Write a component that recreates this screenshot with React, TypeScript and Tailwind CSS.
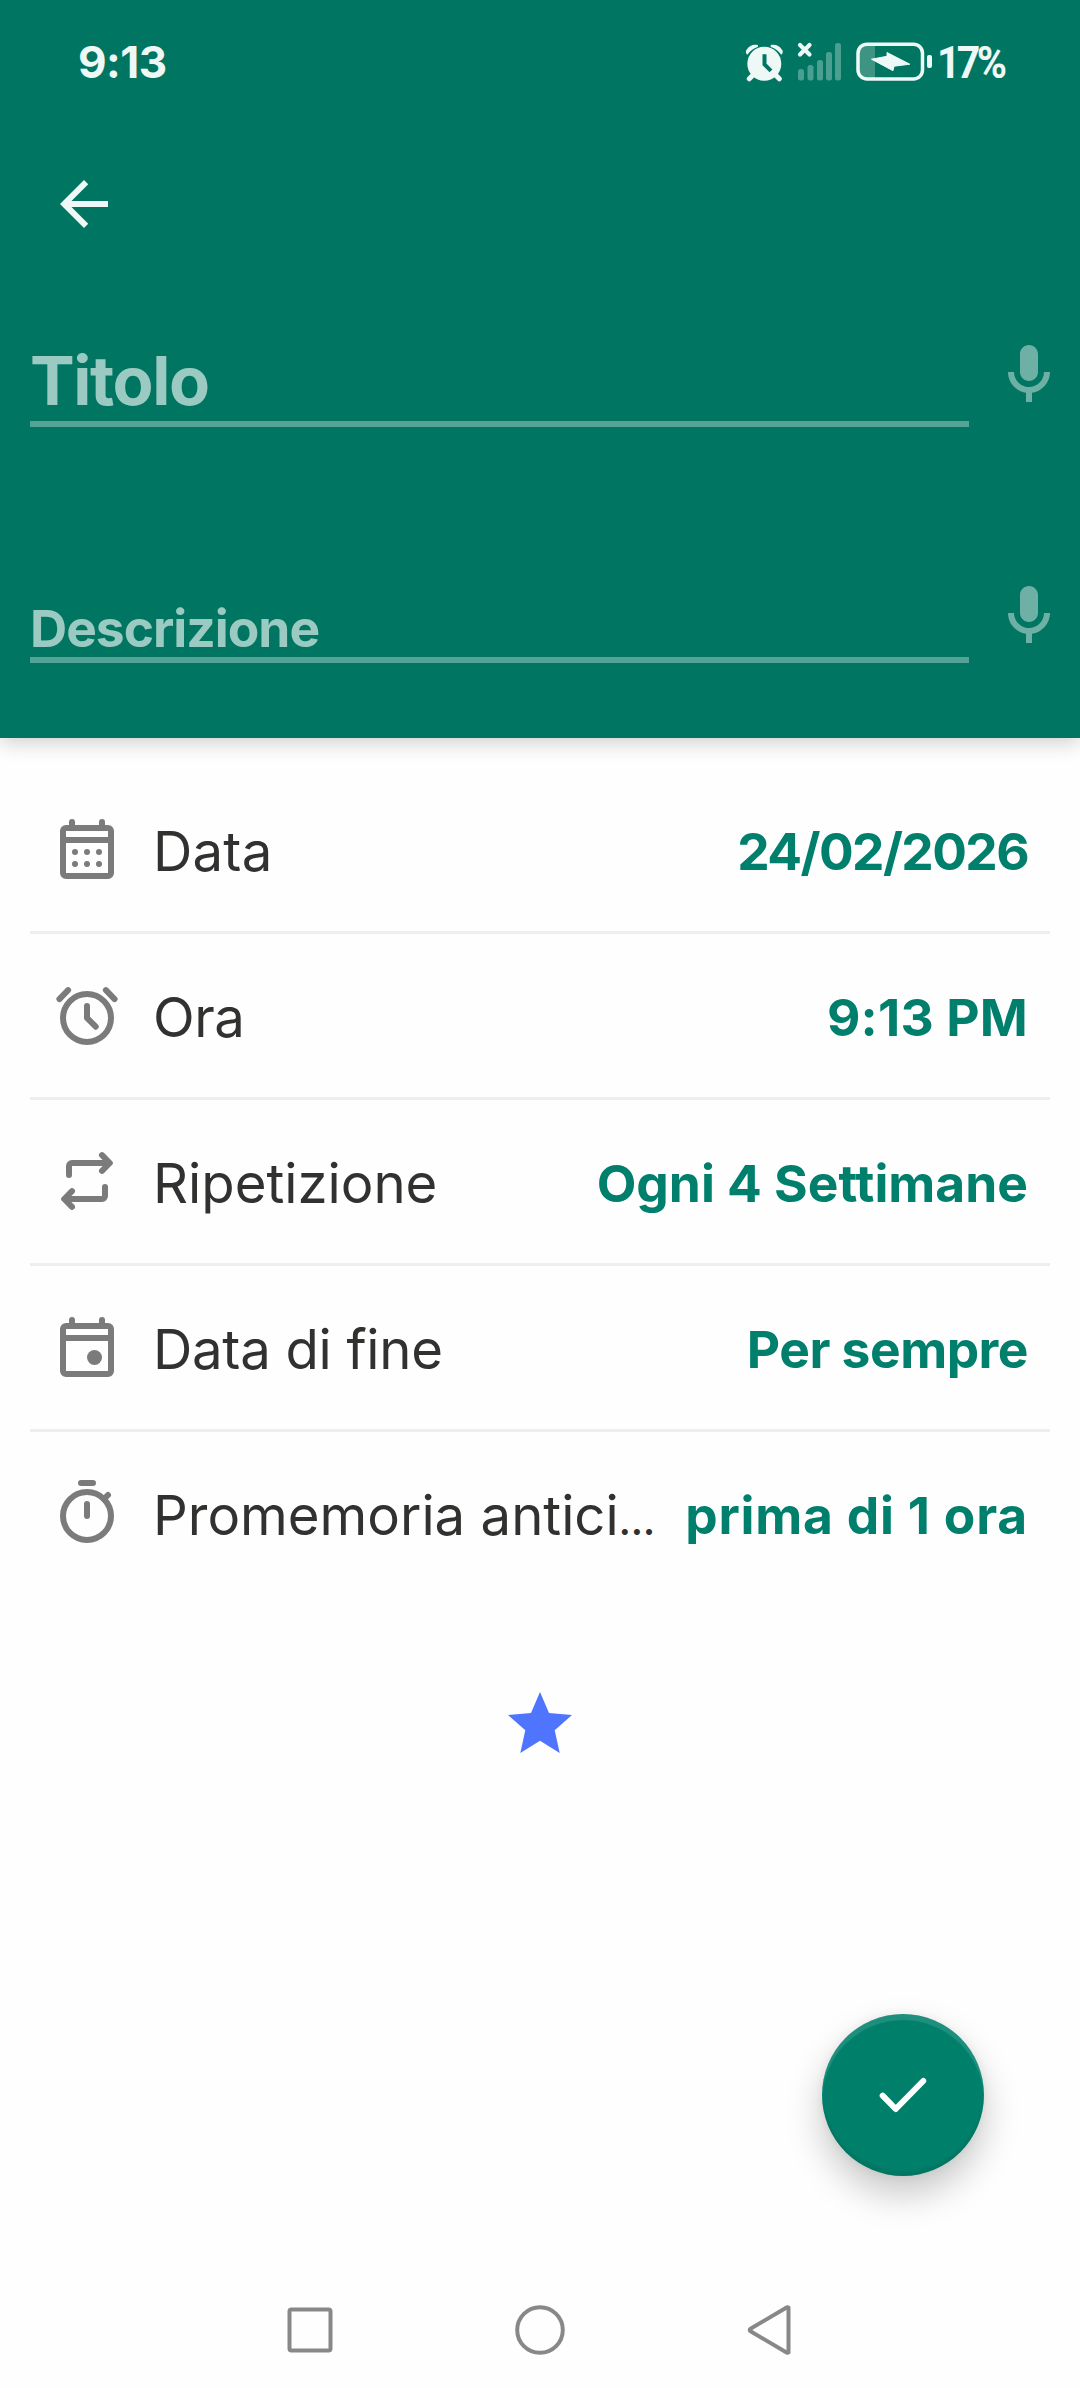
import React from 'react';

type IconProps = { children: React.ReactNode };

const RowIcon = ({ children }: IconProps) => (
  <svg
    viewBox="0 0 24 24"
    className="mb-px w-[72px] h-[72px] flex-shrink-0 text-[#7b7b7b]"
    fill="none"
    stroke="currentColor"
    strokeWidth="2"
    strokeLinecap="round"
    strokeLinejoin="round"
  >
    {children}
  </svg>
);

const calendarFrame = (
  <>
    <rect x="4" y="5" width="16" height="16" rx="1" />
    <path d="M4 9h16M7 3v2M17 3v2" />
  </>
);

const rows = [
  {
    label: 'Data',
    value: '24/02/2026',
    labelClass: 'tracking-[0.2px]',
    valueClass: 'tracking-[-1.6px]',
    truncated: false,
    icon: (
      <>
        {calendarFrame}
        <g fill="currentColor" stroke="none">
          <circle cx="8" cy="13" r="1" />
          <circle cx="12" cy="13" r="1" />
          <circle cx="16" cy="13" r="1" />
          <circle cx="8" cy="17" r="1" />
          <circle cx="12" cy="17" r="1" />
          <circle cx="16" cy="17" r="1" />
        </g>
      </>
    ),
  },
  {
    label: 'Ora',
    value: '9:13 PM',
    labelClass: 'tracking-[-0.5px]',
    valueClass: 'tracking-[0.2px]',
    truncated: false,
    icon: (
      <>
        <circle cx="12" cy="13" r="8" />
        <path d="M12 9v4l2.9 2.9M5.7 3.7 2.8 6.7M18.3 3.7l2.9 3" />
      </>
    ),
  },
  {
    label: 'Ripetizione',
    value: 'Ogni 4 Settimane',
    labelClass: 'tracking-[0px]',
    valueClass: 'tracking-[0px]',
    truncated: false,
    icon: (
      <>
        <path d="M6 10V7a1 1 0 0 1 1-1h12M17 3.4 19.6 6 17 8.6" />
        <path d="M18 14v3a1 1 0 0 1-1 1H5M7 15.4 4.4 18 7 20.6" />
      </>
    ),
  },
  {
    label: 'Data di fine',
    value: 'Per sempre',
    labelClass: 'tracking-[-0.3px]',
    valueClass: 'tracking-[-0.5px]',
    truncated: false,
    icon: (
      <>
        {calendarFrame}
        <circle cx="14.5" cy="15.5" r="2.5" fill="currentColor" stroke="none" />
      </>
    ),
  },
  {
    label: 'Promemoria antici',
    value: 'prima di 1 ora',
    labelClass: 'tracking-[0px]',
    valueClass: 'tracking-[0.8px]',
    truncated: true,
    icon: (
      <>
        <circle cx="12" cy="13" r="8" />
        <path d="M10 2h4M12 9v4M19 6l-1.4 1.4" />
      </>
    ),
  },
];

const MicIcon = () => (
  <svg viewBox="0 0 24 24" className="w-[72px] h-[72px] flex-shrink-0" fill="#6eb0a5">
    <path d="M12 14c1.66 0 3-1.34 3-3V5c0-1.66-1.34-3-3-3S9 3.34 9 5v6c0 1.66 1.34 3 3 3zm5-3c0 2.76-2.24 5-5 5s-5-2.24-5-5H5c0 3.53 2.61 6.43 6 6.92V21h2v-3.08c3.39-.49 6-3.39 6-6.92h-2z" />
  </svg>
);

const StatusBar = () => (
  <div className="flex h-[124px] items-center justify-between pl-[78px] pr-[74px] text-[#eef9f7]">
    <span className="text-[44px] leading-none font-[650] tracking-[-0.5px]">9:13</span>
    <div className="flex items-center">
      {/* Sveglia, segnale e batteria */}
      <svg viewBox="0 0 190 44" className="w-[190px] h-[44px] overflow-visible" fill="none">
        <g transform="translate(1.800 .3)">
          <g fill="#eef9f7">
            <circle cx="22.500" cy="23.500" r="17" />
            <path d="M5.500 14.500a3.500 3.500 0 0 1-.3-5.500A10 10 0 0 1 15 4.500a1.500 1.500 0 0 1 .8 2.300A22 22 0 0 0 5.500 14.500z" />
            <path d="M39.500 14.500a3.500 3.500 0 0 0 .3-5.500A10 10 0 0 0 30 4.500a1.500 1.500 0 0 0-.8 2.300A22 22 0 0 1 39.500 14.500z" />
          </g>
          <path d="M11 35l-3.500 3.500M34 35l3.500 3.500" stroke="#eef9f7" strokeWidth="5" strokeLinecap="round" />
          <path d="M22.700 14v10l6.500 6.500" stroke="#007662" strokeWidth="4" />
        </g>
        <path d="M60 5l9.500 9.500M69.500 5 60 14.500" stroke="#eef9f7" strokeWidth="4.200" strokeLinecap="round" />
        <g fill="#4a9f90">
          <rect x="58" y="29" width="6" height="11.500" rx="2.500" />
          <rect x="67.500" y="25" width="6" height="15.500" rx="2.500" />
          <rect x="77" y="20" width="6" height="20.500" rx="2.500" />
          <rect x="86" y="12" width="6" height="28.500" rx="2.500" />
          <rect x="95" y="3" width="6" height="37.500" rx="2.500" />
        </g>
        <path d="M135 5h-8a9 9 0 0 0-9 9v15a9 9 0 0 0 9 9h8z" fill="#3d9482" />
        <rect x="118" y="4.200" width="64.500" height="34.800" rx="9" stroke="#eef9f7" strokeWidth="3.500" />
        <path
          d="M131.500 19.200 147 16.300V12.500L169.800 24.200 154 26.200 153 30.700z"
          fill="#eef9f7"
          stroke="#eef9f7"
          strokeLinejoin="round"
        />
        <rect x="187" y="15" width="5" height="13" rx="2" fill="#eef9f7" />
      </svg>
      <span
        className="ml-[7px] w-[69px] origin-left scale-x-[0.91] whitespace-nowrap text-[45px] leading-none font-bold tracking-[-4px]"
        style={{ fontFamily: 'Roboto, sans-serif' }}
      >
        17%
      </span>
    </div>
  </div>
);

const App = () => {
  return (
    <div
      className="flex h-[2388px] w-[1080px] flex-col overflow-hidden bg-[#fefefe]"
      style={{ fontFamily: 'Inter, "Liberation Sans", sans-serif' }}
    >
      <header className="h-[738px] flex-shrink-0 bg-[#007662] shadow-[0_4px_20px_rgba(0,0,0,0.2)]">
        <StatusBar />
        <button type="button" className="mt-[44px] ml-[48px] block">
          <svg viewBox="0 0 24 24" className="block w-[72px] h-[72px]" fill="#eef9f7">
            <path d="M20 11H7.830l5.590-5.590L12 4l-8 8 8 8 1.410-1.410L7.830 13H20v-2z" />
          </svg>
        </button>

        <div className="mt-[99px] flex h-[88px] gap-6 pl-[30px]">
          <div className="w-[939px] self-end border-b-[6px] border-[#54a396] text-[67px] leading-[80px] font-bold text-[#9bcac3] tracking-[-1.4px]">
            Titolo
          </div>
          <MicIcon />
        </div>

        <div className="mt-[153px] flex h-[83px] gap-6 pl-[30px]">
          <div className="w-[939px] self-end border-b-[6px] border-[#54a396] text-[51.500px] leading-[58px] font-[650] text-[#9bcac3] tracking-[-1px]">
            Descrizione
          </div>
          <MicIcon />
        </div>
      </header>

      <main className="flex flex-1 flex-col px-[30px] pt-[30px]">
        <ul className="divide-y-[3px] divide-[#eeeeee]">
          {rows.map((row) => (
            <li key={row.label} className="flex h-[166px] items-center pl-[21px] pr-[22px] last:h-[163px]">
              <RowIcon>{row.icon}</RowIcon>
              <span className={`ml-[30px] flex-1 whitespace-nowrap pt-[3px] text-[54.500px] leading-[72px] text-[#313130] ${row.labelClass}`}>
                {row.label}
                {row.truncated && <span className="text-[38px] leading-none font-semibold">…</span>}
              </span>
              <span className={`whitespace-nowrap pt-[3px] text-[51.500px] leading-[72px] font-[650] text-[#007f6c] ${row.valueClass}`}>
                {row.value}
              </span>
            </li>
          ))}
        </ul>

        <svg viewBox="0 0 64 61" className="mt-[97px] w-[64px] h-[61px] self-center" fill="#4f74fe">
          <path d="M32 0l9 21 23 2-17.300 15.200L51.700 61 32 48.700 12.300 61l5-22.800L0 23l23-2z" />
        </svg>

        <button
          type="button"
          className="mt-[261px] mr-[66px] flex h-[162px] w-[162px] items-center justify-center self-end rounded-full bg-[#00806b] shadow-[0_18px_36px_rgba(0,0,0,0.22),0_0_10px_rgba(0,0,0,0.06),inset_0_6px_1px_rgba(255,255,255,0.12),inset_0_-5px_3px_rgba(0,0,0,0.08)]"
        >
          <svg viewBox="0 0 72 72" className="w-[72px] h-[72px]" fill="none" stroke="#fff" strokeWidth="6" strokeLinecap="round" strokeLinejoin="round">
            <path d="M15.700 36.700 28.700 50l27.500-28" />
          </svg>
        </button>
      </main>

      <nav className="flex h-[116px] flex-shrink-0 items-center justify-center gap-[178px] text-[#888888]">
        <svg viewBox="0 0 52 52" className="w-[52px] h-[52px]" fill="none" stroke="currentColor" strokeWidth="4">
          <rect x="5.500" y="5.500" width="41" height="41" rx="2" />
        </svg>
        <svg viewBox="0 0 52 52" className="w-[52px] h-[52px]" fill="none" stroke="currentColor" strokeWidth="4">
          <circle cx="26" cy="26" r="22.800" />
        </svg>
        <svg viewBox="0 0 52 52" className="w-[52px] h-[52px]" fill="none" stroke="currentColor" strokeWidth="4" strokeLinejoin="round">
          <path d="M44.500 3.500v45a1.500 1.500 0 0 1-1.500.2L6.500 27.300a1.500 1.500 0 0 1 0-2.600L43 3.300a1.500 1.500 0 0 1 1.500.2z" />
        </svg>
      </nav>
    </div>
  );
};

export default App;
